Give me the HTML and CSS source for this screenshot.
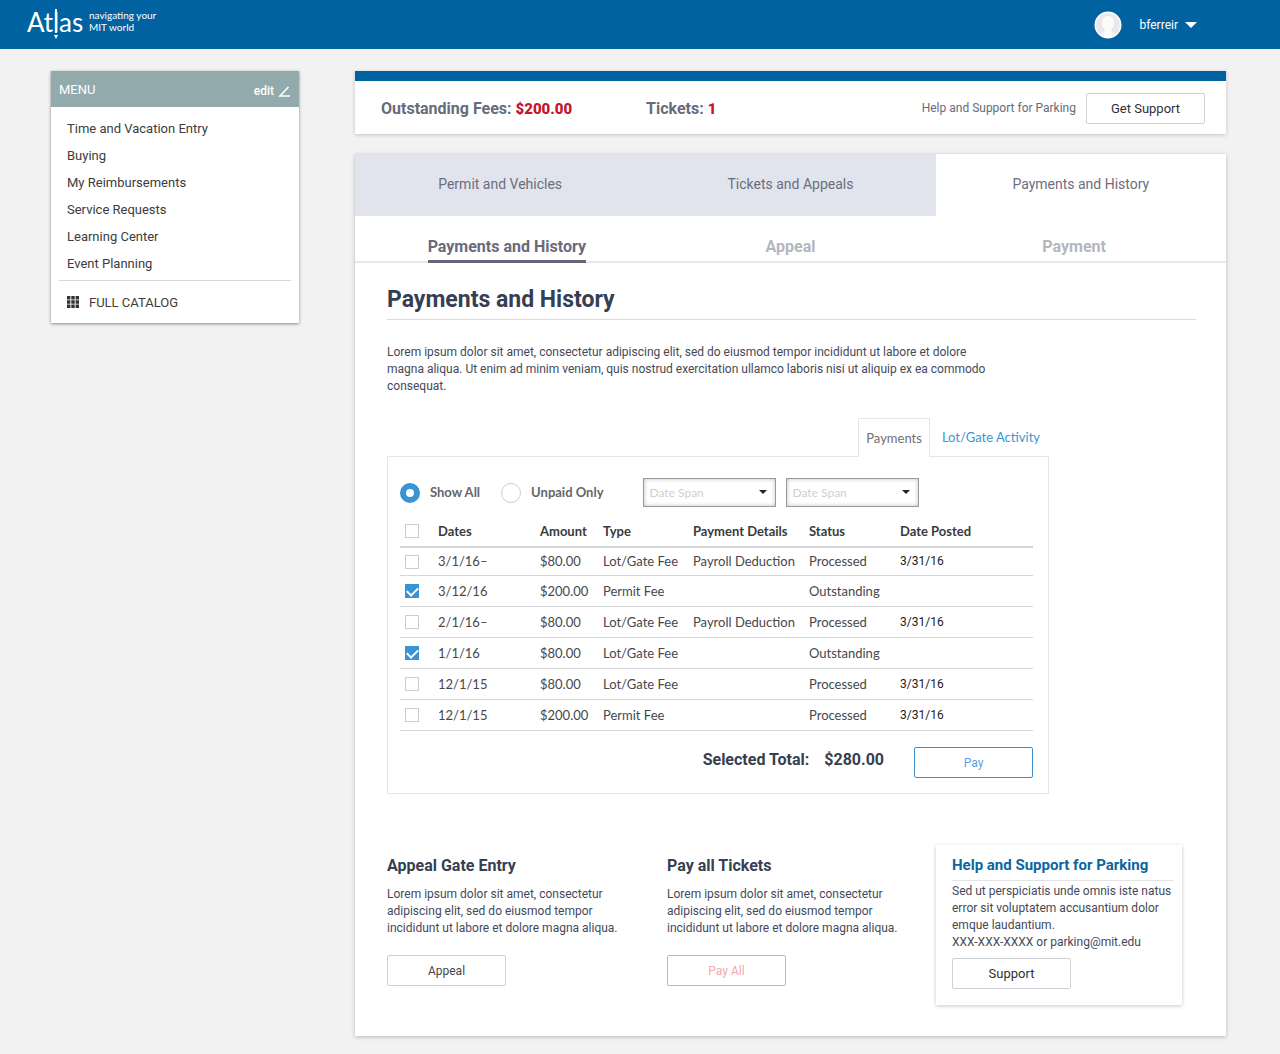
FILE: index.html
```html
<!DOCTYPE html>
<html lang="en">
<head>
<meta charset="utf-8">
<meta name="viewport" content="width=device-width, initial-scale=1">
<title>Atlas – Payments and History</title>
<link rel="stylesheet" href="styles.css">
</head>
<body>
<header class="topbar">
  <a class="logo" href="#">
    <svg class="logo-mark" width="58" height="36" viewBox="0 0 58 36" role="img">
      <text y="25"><tspan x="0">At</tspan><tspan x="26">l</tspan><tspan x="32">as</tspan></text>
      <path d="M28 2h2v24h-2zM27 28h4l-2 4z"/>
    </svg>
    <span class="logo-tag">navigating your<br>MIT world</span>
  </a>
  <button class="account" type="button">
    <svg class="avatar" width="28" height="28" viewBox="0 0 28 28" aria-hidden="true">
      <circle cx="14" cy="14" r="13.500" fill="#fff"/>
      <circle cx="14" cy="14" r="12" fill="#e9e9eb"/>
      <path d="M14 5c-4 0-6 3-6 6.500 0 3 1 5 2.500 6.500v2c0 1-3 2-4.500 3.500a12 12 0 0 0 16 0c-1.500-1.500-4.500-2.500-4.500-3.500v-2c1.500-1.500 2.500-3.500 2.500-6.500C20 8 18 5 14 5z" fill="#fbfbfb"/>
    </svg>
    <span>bferreir</span>
    <svg class="caret" width="12" height="6" viewBox="0 0 12 6" aria-hidden="true"><path d="M0 0h12L6 6z" fill="#fff"/></svg>
  </button>
</header>

<div class="page">
  <nav class="menu" aria-label="Menu">
    <div class="menu-head">
      <h2>MENU</h2>
      <a class="menu-edit" href="#">edit
        <svg width="12" height="12" viewBox="0 0 12 12" aria-hidden="true"><path d="M10.500 1L2 10H12" fill="none" stroke="#fff" stroke-width="1.600"/></svg>
      </a>
    </div>
    <ul class="menu-list">
      <li><a href="#">Time and Vacation Entry</a></li>
      <li><a href="#">Buying</a></li>
      <li><a href="#">My Reimbursements</a></li>
      <li><a href="#">Service Requests</a></li>
      <li><a href="#">Learning Center</a></li>
      <li><a href="#">Event Planning</a></li>
    </ul>
    <a class="menu-all" href="#">
      <svg width="12" height="12" viewBox="0 0 12 12" aria-hidden="true"><path d="M0 0h3.400v3.400H0zM4.300 0h3.400v3.400H4.300zM8.600 0H12v3.400H8.600zM0 4.300h3.400v3.400H0zM4.300 4.300h3.400v3.400H4.300zM8.600 4.300H12v3.400H8.600zM0 8.600h3.400V12H0zM4.300 8.600h3.400V12H4.300zM8.600 8.600H12V12H8.600z" fill="#333"/></svg>
      FULL CATALOG
    </a>
  </nav>

  <main class="main">
    <section class="summary">
      <p class="stat">Outstanding Fees: <strong>$200.00</strong></p>
      <p class="stat">Tickets: <strong>1</strong></p>
      <div class="summary-help">
        <span>Help and Support for Parking</span>
        <button class="btn btn-large" type="button">Get Support</button>
      </div>
    </section>

    <section class="panel">
      <nav class="tabs" aria-label="Parking">
        <a href="#">Permit and Vehicles</a>
        <a href="#">Tickets and Appeals</a>
        <a class="active" href="#" aria-current="page">Payments and History</a>
      </nav>
      <nav class="subtabs" aria-label="Payments">
        <a class="active" href="#" aria-current="page">Payments and History</a>
        <a href="#">Appeal</a>
        <a href="#">Payment</a>
      </nav>

      <div class="content">
        <h1>Payments and History</h1>
        <p class="intro">Lorem ipsum dolor sit amet, consectetur adipiscing elit, sed do eiusmod tempor incididunt ut labore et dolore magna aliqua. Ut enim ad minim veniam, quis nostrud exercitation ullamco laboris nisi ut aliquip ex ea commodo consequat.</p>

        <div class="ledger">
          <nav class="ledger-tabs" aria-label="Activity">
            <a class="active" href="#" aria-current="page">Payments</a>
            <a href="#">Lot/Gate Activity</a>
          </nav>
          <form class="ledger-box">
            <div class="filters">
              <label class="radio"><input type="radio" name="show" checked>Show All</label>
              <label class="radio"><input type="radio" name="show">Unpaid Only</label>
              <div class="spans">
                <span class="select"><select aria-label="Date span from"><option>Date Span</option></select></span>
                <span class="select"><select aria-label="Date span to"><option>Date Span</option></select></span>
              </div>
            </div>
            <table class="payments">
              <colgroup><col class="c-check"><col class="c-dates"><col class="c-amount"><col class="c-type"><col class="c-details"><col class="c-status"><col></colgroup>
              <thead>
                <tr><th><input type="checkbox" aria-label="Select all"></th><th>Dates</th><th>Amount</th><th>Type</th><th>Payment Details</th><th>Status</th><th>Date Posted</th></tr>
              </thead>
              <tbody>
                <tr><td><input type="checkbox" aria-label="Select 3/1/16"></td><td>3/1/16–</td><td>$80.00</td><td>Lot/Gate Fee</td><td>Payroll Deduction</td><td>Processed</td><td class="posted">3/31/16</td></tr>
                <tr><td><input type="checkbox" aria-label="Select 3/12/16" checked></td><td>3/12/16</td><td>$200.00</td><td>Permit Fee</td><td></td><td>Outstanding</td><td class="posted"></td></tr>
                <tr><td><input type="checkbox" aria-label="Select 2/1/16"></td><td>2/1/16–</td><td>$80.00</td><td>Lot/Gate Fee</td><td>Payroll Deduction</td><td>Processed</td><td class="posted">3/31/16</td></tr>
                <tr><td><input type="checkbox" aria-label="Select 1/1/16" checked></td><td>1/1/16</td><td>$80.00</td><td>Lot/Gate Fee</td><td></td><td>Outstanding</td><td class="posted"></td></tr>
                <tr><td><input type="checkbox" aria-label="Select 12/1/15 lot fee"></td><td>12/1/15</td><td>$80.00</td><td>Lot/Gate Fee</td><td></td><td>Processed</td><td class="posted">3/31/16</td></tr>
                <tr><td><input type="checkbox" aria-label="Select 12/1/15 permit fee"></td><td>12/1/15</td><td>$200.00</td><td>Permit Fee</td><td></td><td>Processed</td><td class="posted">3/31/16</td></tr>
              </tbody>
            </table>
            <div class="total">
              <span>Selected Total:</span>
              <output>$280.00</output>
              <button class="btn btn-blue" type="button">Pay</button>
            </div>
          </form>
        </div>

        <div class="cards">
          <section class="card">
            <h2>Appeal Gate Entry</h2>
            <p>Lorem ipsum dolor sit amet, consectetur adipiscing elit, sed do eiusmod tempor incididunt ut labore et dolore magna aliqua.</p>
            <button class="btn" type="button">Appeal</button>
          </section>
          <section class="card">
            <h2>Pay all Tickets</h2>
            <p>Lorem ipsum dolor sit amet, consectetur adipiscing elit, sed do eiusmod tempor incididunt ut labore et dolore magna aliqua.</p>
            <button class="btn btn-red" type="button">Pay All</button>
          </section>
          <section class="help">
            <h2>Help and Support for Parking</h2>
            <p>Sed ut perspiciatis unde omnis iste natus error sit voluptatem accusantium dolor emque laudantium.<br>XXX-XXX-XXXX or parking@mit.edu</p>
            <button class="btn btn-large" type="button">Support</button>
          </section>
        </div>
      </div>
    </section>
  </main>
</div>
</body>
</html>
```

FILE: styles.css
```css
* { box-sizing: border-box; }
body {
  margin: 0;
  background: #f2f2f2;
  color: #45495a;
  font: 12px/17px Roboto, "Liberation Sans", sans-serif;
}
h1, h2, p, ul { margin: 0; padding: 0; }
ul { list-style: none; }
a { color: inherit; text-decoration: none; }
button, select { font-family: inherit; }

/* Top bar */
.topbar {
  display: flex;
  align-items: center;
  justify-content: space-between;
  height: 49px;
  padding: 0 83px 0 27px;
  background: #0062a0;
  color: #fff;
}
.logo { display: flex; gap: 4px; }
.logo-mark { fill: #fff; font: 26px Lato, sans-serif; overflow: visible; }
.logo-tag { font: 10px/12px Lato, sans-serif; padding-top: 2px; }
.account {
  display: flex;
  align-items: center;
  padding: 0;
  border: 0;
  background: none;
  color: #fff;
  font-size: 12px;
}
.avatar { margin-right: 17px; }
.caret { margin-left: 7px; }

.page {
  display: flex;
  align-items: flex-start;
  gap: 56px;
  padding: 22px 54px 18px 51px;
}

/* Side menu */
.menu {
  flex: 0 0 248px;
  background: #fff;
  box-shadow: 0 1px 3px rgba(0, 0, 0, .45);
  color: #3c3c3c;
  font-size: 13px;
}
.menu-head {
  display: flex;
  justify-content: space-between;
  align-items: center;
  height: 36px;
  padding: 0 9px 0 8px;
  background: #93aaad;
  color: #fff;
}
.menu-head h2 { font-size: 13px; font-weight: 400; }
.menu-edit { display: flex; align-items: center; gap: 4px; padding-top: 5px; font-size: 12px; font-weight: 500; }
.menu-list { margin: 0 8px; padding: 8px 8px 3px; border-bottom: 1px solid #d8d8d8; line-height: 27px; }
.menu-all { display: flex; align-items: center; gap: 10px; height: 42px; padding: 0 16px; }

.main { flex: 1; min-width: 0; }

/* Account summary */
.summary {
  display: flex;
  align-items: center;
  padding: 12px 21px 10px 26px;
  border-top: 10px solid #0062a0;
  background: #fff;
  box-shadow: 0 1px 4px rgba(0, 0, 0, .2);
}
.stat { width: 265px; color: #686b7b; font-size: 16px; font-weight: 700; }
.stat strong { color: #c4162f; font-size: 15px; }
.summary-help { display: flex; align-items: center; gap: 10px; margin-left: auto; color: #686b7b; white-space: nowrap; }

.btn {
  width: 119px;
  height: 31px;
  border: 1px solid #cfcfd6;
  border-radius: 2px;
  background: #fff;
  color: #45454d;
  font-size: 12px;
}
.btn-large { color: #303036; font-size: 13px; }
.btn-blue { border-color: #3f8fcb; color: #57a3e0; }
.btn-red { border-color: #e9a4a8; color: #f0a9ac; }

/* Panel and its tabs */
.panel { margin-top: 20px; background: #fff; box-shadow: 0 1px 4px rgba(0, 0, 0, .25); }
.tabs { display: grid; grid-template-columns: repeat(3, 1fr); color: #6b6e7e; font-size: 14px; text-align: center; }
.tabs a { height: 62px; background: #e1e4ed; line-height: 60px; }
.tabs .active { background: #fff; }
.subtabs {
  display: grid;
  grid-template-columns: repeat(3, 1fr);
  justify-items: center;
  padding: 16px 10px 0;
  border-bottom: 2px solid #e8e8ec;
  color: #b5b7be;
  font-size: 16px;
  font-weight: 700;
}
.subtabs a { height: 31px; margin-bottom: -2px; line-height: 30px; border-bottom: 3px solid transparent; }
.subtabs .active { border-color: #686578; color: #686b7b; }

.content { padding: 21px 30px 31px 32px; }
h1 {
  padding-bottom: 3px;
  border-bottom: 1px solid #d9dade;
  color: #363f52;
  font-size: 23px;
  line-height: 32px;
}
.intro { max-width: 612px; margin-top: 24px; }

/* Payments ledger */
.ledger { width: 662px; max-width: 100%; margin-top: 23px; color: #47474c; font-family: Lato, sans-serif; font-size: 13px; }
.ledger-tabs { display: flex; justify-content: flex-end; line-height: 38px; }
.ledger-tabs a { padding: 0 9px 0 12px; color: #3b97d3; }
.ledger-tabs .active {
  margin-bottom: -1px;
  padding: 0 7px;
  border: 1px solid #e6e6e8;
  border-bottom: 0;
  background: #fff;
  color: #707078;
}
.ledger-box { padding: 21px 15px 15px 12px; border: 1px solid #e6e6e8; }
.filters { display: flex; align-items: center; height: 29px; }
.radio { display: flex; align-items: center; gap: 10px; margin-right: 21px; color: #66666b; font-weight: 700; }
.spans { display: flex; gap: 10px; margin-left: 18px; }
.select { display: flex; position: relative; }
.select::after {
  content: "";
  position: absolute;
  top: 12px;
  right: 9px;
  border: 4px solid transparent;
  border-top-color: #222;
  border-bottom: 0;
}
.select select {
  width: 133px;
  height: 29px;
  padding: 0 6px;
  border: 1px solid #999;
  border-radius: 0;
  background: #fff;
  box-shadow: inset 0 0 4px rgba(0, 0, 0, .25);
  color: #cfcfcf;
  font-size: 12px;
  appearance: none;
}
input { position: relative; margin: 0; appearance: none; border: 1px solid #cdcdd0; background: #fff; }
input[type="radio"] { width: 20px; height: 20px; border-radius: 50%; }
input[type="radio"]:checked { border: 6px solid #3994d6; }
input[type="checkbox"] { display: block; width: 14px; height: 14px; margin-left: 5px; }
input[type="checkbox"]:checked { border-color: #3994d6; background: #3994d6; }
input[type="checkbox"]:checked::before {
  content: "";
  position: absolute;
  top: 2px;
  left: 1px;
  width: 9px;
  height: 5px;
  border: solid #fff;
  border-width: 0 0 2px 2px;
  transform: rotate(-45deg);
}

.payments { width: 100%; margin-top: 9px; border-collapse: separate; border-spacing: 0; table-layout: fixed; }
.payments th, .payments td { height: 31px; padding: 0; border-bottom: 1px solid #d6d6d8; text-align: left; white-space: nowrap; }
.payments th { height: 32px; border-bottom: 2px solid #d6d6d8; color: #3a3a3e; }
.payments tbody tr:first-child td { height: 28px; }
.payments .posted { color: #1c1c1c; font-family: Roboto, sans-serif; font-size: 12px; }
.c-check { width: 38px; }
.c-dates { width: 102px; }
.c-amount { width: 63px; }
.c-type { width: 90px; }
.c-details { width: 116px; }
.c-status { width: 91px; }

.total {
  display: flex;
  align-items: flex-start;
  justify-content: flex-end;
  gap: 15px;
  margin-top: 16px;
  color: #363f52;
  font: 700 16px/26px Roboto, sans-serif;
}
.total .btn { margin-left: 15px; }

/* Cards under the ledger */
.cards { display: grid; grid-template-columns: 280px 269px 246px; margin-top: 51px; }
.card { padding-top: 8px; }
.card h2 { color: #363f52; font-size: 16px; line-height: 26px; }
.card p { max-width: 240px; margin: 7px 0 18px; }
.help { padding: 8px 8px 16px 16px; background: #fff; box-shadow: 0 1px 4px rgba(0, 0, 0, .22); }
.help h2 { padding-bottom: 3px; border-bottom: 1px solid #e3e3e6; color: #0c669f; font-size: 15px; line-height: 24px; }
.help p { margin: 2px 0 7px; }
```
